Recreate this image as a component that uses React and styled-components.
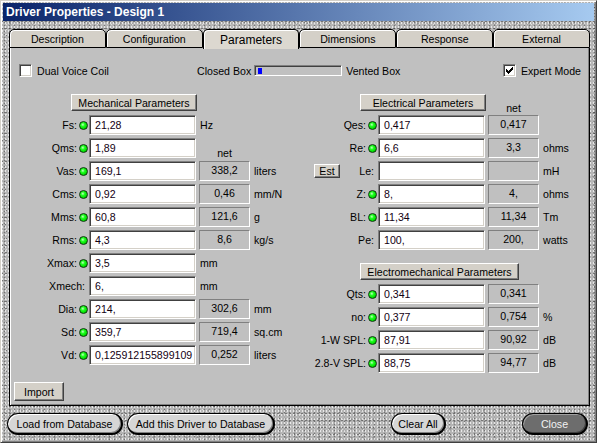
import React from 'react';
import styled, { createGlobalStyle } from 'styled-components';

const Global = createGlobalStyle`
  html, body { margin: 0; padding: 0; background: #fff; }
  body { font-family: "Liberation Sans", Arial, sans-serif; font-size: 10.6px; color: #000; }
  #root { width: 597px; height: 443px; }
  * { box-sizing: border-box; }
`;

const texture = `
  radial-gradient(circle, rgba(255,255,255,0.7) 0.6px, transparent 1.1px) 0 0 / 3px 4px,
  radial-gradient(circle, rgba(60,60,60,0.55) 0.6px, transparent 1.1px) 1px 2px / 5px 3px,
  radial-gradient(circle, rgba(255,255,255,0.5) 0.5px, transparent 1px) 2px 1px / 7px 5px,
  radial-gradient(circle, rgba(40,40,40,0.45) 0.5px, transparent 1px) 3px 3px / 4px 7px,
  radial-gradient(circle, rgba(90,90,90,0.4) 0.8px, transparent 1.3px) 4px 0 / 11px 9px,
  #b6b6b6
`;

const Window = styled.div`
  width: 597px;
  height: 443px;
  display: flex;
  flex-direction: column;
  border: 1px solid;
  border-color: #d4d0c8 #404040 #404040 #d4d0c8;
  box-shadow: inset 1px 1px #fff, inset -1px -1px #808080;
  padding: 2px;
  background: ${texture};
`;

const TitleBar = styled.div`
  height: 18px;
  flex: none;
  display: flex;
  align-items: center;
  padding-left: 3px;
  background: linear-gradient(90deg, #0a246a, #a6caf0);
  color: #fff;
  font: bold 12px "Liberation Sans", Arial, sans-serif;
`;

const Body = styled.div`
  flex: 1;
  min-height: 0;
  display: flex;
  flex-direction: column;
  padding: 8px 4px 5px 6px;
`;

const TabRow = styled.div`
  display: flex;
  height: 19px;
  flex: none;
  position: relative;
  z-index: 1;
  align-items: flex-start;
`;

const Tab = styled.div`
  flex: 1;
  height: ${p => (p.$active ? '20px' : '19px')};
  margin-bottom: ${p => (p.$active ? '-1px' : '0')};
  display: flex;
  align-items: center;
  justify-content: center;
  border: 1px solid #000;
  border-bottom: ${p => (p.$active ? 'none' : '1px solid #000')};
  border-radius: 5px 5px 0 0;
  background: ${p => (p.$active ? '#dcd8d0' : '#d4d0c8')};
  box-shadow: inset 1px 1px #fff;
  font-size: ${p => (p.$active ? '12px' : '10.6px')};
  color: #000;
`;

const Panel = styled.div`
  flex: 1;
  min-height: 0;
  display: flex;
  flex-direction: column;
  background: #c0c0c0;
  border: 1px solid #000;
  border-top: none;
  box-shadow: inset 1px 0 #fff, inset -1px -1px #808080;
  padding: 16px 0 4px 0;
`;

const TopRow = styled.div`
  display: flex;
  align-items: center;
  height: 13px;
  padding: 0 8px 0 9px;
`;

const CheckGroup = styled.div`
  display: flex;
  align-items: center;
  gap: 5px;
  width: ${p => (p.$w ? `${p.$w}px` : 'auto')};
  margin-left: ${p => (p.$push ? 'auto' : '0')};
`;

const CheckBox = styled.div`
  width: 13px;
  height: 13px;
  flex: none;
  background: #fff;
  border: 1px solid;
  border-color: #808080 #fff #fff #808080;
  box-shadow: inset 1px 1px #404040, inset -1px -1px #d4d0c8;
  display: flex;
  align-items: center;
  justify-content: center;
`;

const SliderGroup = styled.div`
  display: flex;
  align-items: center;
  gap: 3px;
`;

const Trough = styled.div`
  width: 88px;
  height: 11px;
  margin-right: 1px;
  background: #c0c0c0;
  border: 1px solid;
  border-color: #808080 #fff #fff #808080;
  box-shadow: inset 1px 1px #404040;
  display: flex;
  align-items: center;
  padding-left: 3px;
`;

const Thumb = styled.div`
  width: 4px;
  height: 6px;
  background: #0000ff;
`;

const Columns = styled.div`
  display: flex;
  margin-top: 17px;
`;

const Column = styled.div`
  display: flex;
  flex-direction: column;
  width: ${p => (p.$w ? `${p.$w}px` : 'auto')};
  flex: ${p => (p.$w ? 'none' : '1')};
`;

const Header = styled.div`
  display: flex;
  height: 17px;
  padding-left: ${p => p.$pad}px;
  margin-top: ${p => p.$mt || 0}px;
`;

const RaisedButton = styled.div`
  width: ${p => p.$w}px;
  height: ${p => p.$h}px;
  flex: none;
  display: flex;
  align-items: center;
  justify-content: center;
  background: #d4d0c8;
  border: 1px solid;
  border-color: #fff #404040 #404040 #fff;
  box-shadow: inset -1px -1px #808080;
  color: #000;
  white-space: nowrap;
`;

const NetHeader = styled.div`
  width: 51px;
  margin-left: 2px;
  align-self: flex-end;
  line-height: 12px;
  margin-bottom: -3px;
  text-align: center;
`;

const Rows = styled.div`
  display: flex;
  flex-direction: column;
  gap: 3px;
  margin-top: 4px;
`;

const Row = styled.div`
  display: grid;
  grid-template-columns: ${p => p.$lw}px 11px 107px auto;
  height: 20px;
  align-items: center;
`;

const Label = styled.div`
  grid-column: ${p => (p.$led ? '1' : '1 / span 2')};
  display: flex;
  align-items: center;
  justify-content: flex-end;
  padding-right: ${p => (p.$led ? 1 : 4)}px;
  white-space: nowrap;
  height: 20px;
`;

const EstButton = styled(RaisedButton)`
  margin-left: 14px;
  margin-right: auto;
`;

const Led = styled.div`
  grid-column: 2;
  width: 9px;
  height: 9px;
  margin-left: 1px;
  border-radius: 50%;
  border: 1px solid #0c3a0c;
  background: radial-gradient(circle at 40% 38%, #c8ffc8 0, #22ff22 30%, #00e000 65%, #009000 100%);
`;

const Field = styled.div`
  grid-column: 3;
  height: 20px;
  background: #fff;
  border: 1px solid;
  border-color: #808080 #fff #fff #808080;
  box-shadow: inset 1px 1px #404040, inset -1px -1px #d4d0c8;
  padding-left: 5px;
  display: flex;
  align-items: center;
  color: #120012;
  white-space: nowrap;
  overflow: hidden;
`;

const Rest = styled.div`
  grid-column: 4;
  display: flex;
  align-items: center;
  gap: 4px;
  padding-left: 3px;
  height: 20px;
`;

const NetBox = styled.div`
  width: 51px;
  height: 20px;
  flex: none;
  border: 1px solid;
  border-color: #808080 #fff #fff #808080;
  text-align: center;
  line-height: 12px;
  padding-top: 2px;
`;

const NetLabel = styled.div`
  width: 51px;
  align-self: flex-end;
  text-align: center;
  line-height: 12px;
  margin-bottom: -1px;
`;

const Unit = styled.div`
  white-space: nowrap;
  padding-left: ${p => (p.$alone ? 1 : 0)}px;
`;

const ImportButton = styled(RaisedButton)`
  margin-top: auto;
  margin-left: 4px;
`;

const BottomBar = styled.div`
  display: flex;
  align-items: center;
  height: 22px;
  margin-top: 7px;
  margin-left: -2px;
  flex: none;
`;

const Pill = styled.div`
  width: ${p => p.$w}px;
  height: 22px;
  margin-left: ${p => p.$ml || 0}px;
  flex: none;
  display: flex;
  align-items: center;
  justify-content: center;
  border-radius: 11px;
  border: 1px solid #000;
  border-width: 1px 2px 2px 1px;
  background: ${p => (p.$dark ? '#6d6d6d' : '#d6d6d6')};
  color: ${p => (p.$dark ? '#f2f2f2' : '#000')};
  box-shadow: ${p =>
    p.$dark
      ? 'inset 1px 1px #a0a0a0, inset -1px -1px #404040'
      : 'inset 1px 1px #fff, inset -1px -1px #808080'};
  white-space: nowrap;
`;

const CheckMark = () => (
  <svg width="7" height="7" viewBox="0 0 7 7" shapeRendering="crispEdges">
    <polygon points="0,2 2,4 7,-1 7,2 2,7 0,5" fill="#000" />
  </svg>
);

const mech = [
  { l: 'Fs:', led: true, v: '21,28', u: 'Hz' },
  { l: 'Qms:', led: true, v: '1,89', netLabel: true },
  { l: 'Vas:', led: true, v: '169,1', n: '338,2', u: 'liters' },
  { l: 'Cms:', led: true, v: '0,92', n: '0,46', u: 'mm/N' },
  { l: 'Mms:', led: true, v: '60,8', n: '121,6', u: 'g' },
  { l: 'Rms:', led: true, v: '4,3', n: '8,6', u: 'kg/s' },
  { l: 'Xmax:', led: true, v: '3,5', u: 'mm' },
  { l: 'Xmech:', led: false, v: '6,', u: 'mm' },
  { l: 'Dia:', led: true, v: '214,', n: '302,6', u: 'mm' },
  { l: 'Sd:', led: true, v: '359,7', n: '719,4', u: 'sq.cm' },
  { l: 'Vd:', led: true, v: '0,125912155899109', n: '0,252', u: 'liters' },
];

const elec = [
  { l: 'Qes:', led: true, v: '0,417', n: '0,417' },
  { l: 'Re:', led: true, v: '6,6', n: '3,3', u: 'ohms' },
  { l: 'Le:', led: false, v: '', n: '', u: 'mH', est: true },
  { l: 'Z:', led: true, v: '8,', n: '4,', u: 'ohms' },
  { l: 'BL:', led: true, v: '11,34', n: '11,34', u: 'Tm' },
  { l: 'Pe:', led: false, v: '100,', n: '200,', u: 'watts' },
];

const emech = [
  { l: 'Qts:', led: true, v: '0,341', n: '0,341' },
  { l: 'no:', led: true, v: '0,377', n: '0,754', u: '%' },
  { l: '1-W SPL:', led: true, v: '87,91', n: '90,92', u: 'dB' },
  { l: '2.8-V SPL:', led: true, v: '88,75', n: '94,77', u: 'dB' },
];

const ParamRow = ({ r, lw }) => (
  <Row $lw={lw}>
    <Label $led={r.led}>
      {r.est && <EstButton $w={26} $h={14}>Est</EstButton>}
      {r.l}
    </Label>
    {r.led && <Led />}
    <Field>{r.v}</Field>
    <Rest>
      {r.netLabel && <NetLabel>net</NetLabel>}
      {r.n !== undefined && <NetBox>{r.n}</NetBox>}
      {r.u && <Unit $alone={r.n === undefined}>{r.u}</Unit>}
    </Rest>
  </Row>
);

const tabs = ['Description', 'Configuration', 'Parameters', 'Dimensions', 'Response', 'External'];

export default function App() {
  return (
    <>
      <Global />
      <Window>
        <TitleBar>Driver Properties - Design 1</TitleBar>
        <Body>
          <TabRow>
            {tabs.map(t => (
              <Tab key={t} $active={t === 'Parameters'}>{t}</Tab>
            ))}
          </TabRow>
          <Panel>
            <TopRow>
              <CheckGroup $w={178}>
                <CheckBox />
                <span>Dual Voice Coil</span>
              </CheckGroup>
              <SliderGroup>
                <span>Closed Box</span>
                <Trough><Thumb /></Trough>
                <span>Vented Box</span>
              </SliderGroup>
              <CheckGroup $push>
                <CheckBox><CheckMark /></CheckBox>
                <span>Expert Mode</span>
              </CheckGroup>
            </TopRow>
            <Columns>
              <Column $w={290}>
                <Header $pad={61}>
                  <RaisedButton $w={126} $h={17}>Mechanical Parameters</RaisedButton>
                </Header>
                <Rows>
                  {mech.map(r => <ParamRow key={r.l} r={r} lw={68} />)}
                </Rows>
              </Column>
              <Column>
                <Header $pad={60}>
                  <RaisedButton $w={126} $h={17}>Electrical Parameters</RaisedButton>
                  <NetHeader>net</NetHeader>
                </Header>
                <Rows>
                  {elec.map(r => <ParamRow key={r.l} r={r} lw={67} />)}
                </Rows>
                <Header $pad={60} $mt={13}>
                  <RaisedButton $w={159} $h={17}>Electromechanical Parameters</RaisedButton>
                </Header>
                <Rows>
                  {emech.map(r => <ParamRow key={r.l} r={r} lw={67} />)}
                </Rows>
              </Column>
            </Columns>
            <ImportButton $w={50} $h={19}>Import</ImportButton>
          </Panel>
          <BottomBar>
            <Pill $w={116}>Load from Database</Pill>
            <Pill $w={148} $ml={4}>Add this Driver to Database</Pill>
            <Pill $w={55} $ml={116}>Clear All</Pill>
            <Pill $w={66} $ml={76} $dark>Close</Pill>
          </BottomBar>
        </Body>
      </Window>
    </>
  );
}
